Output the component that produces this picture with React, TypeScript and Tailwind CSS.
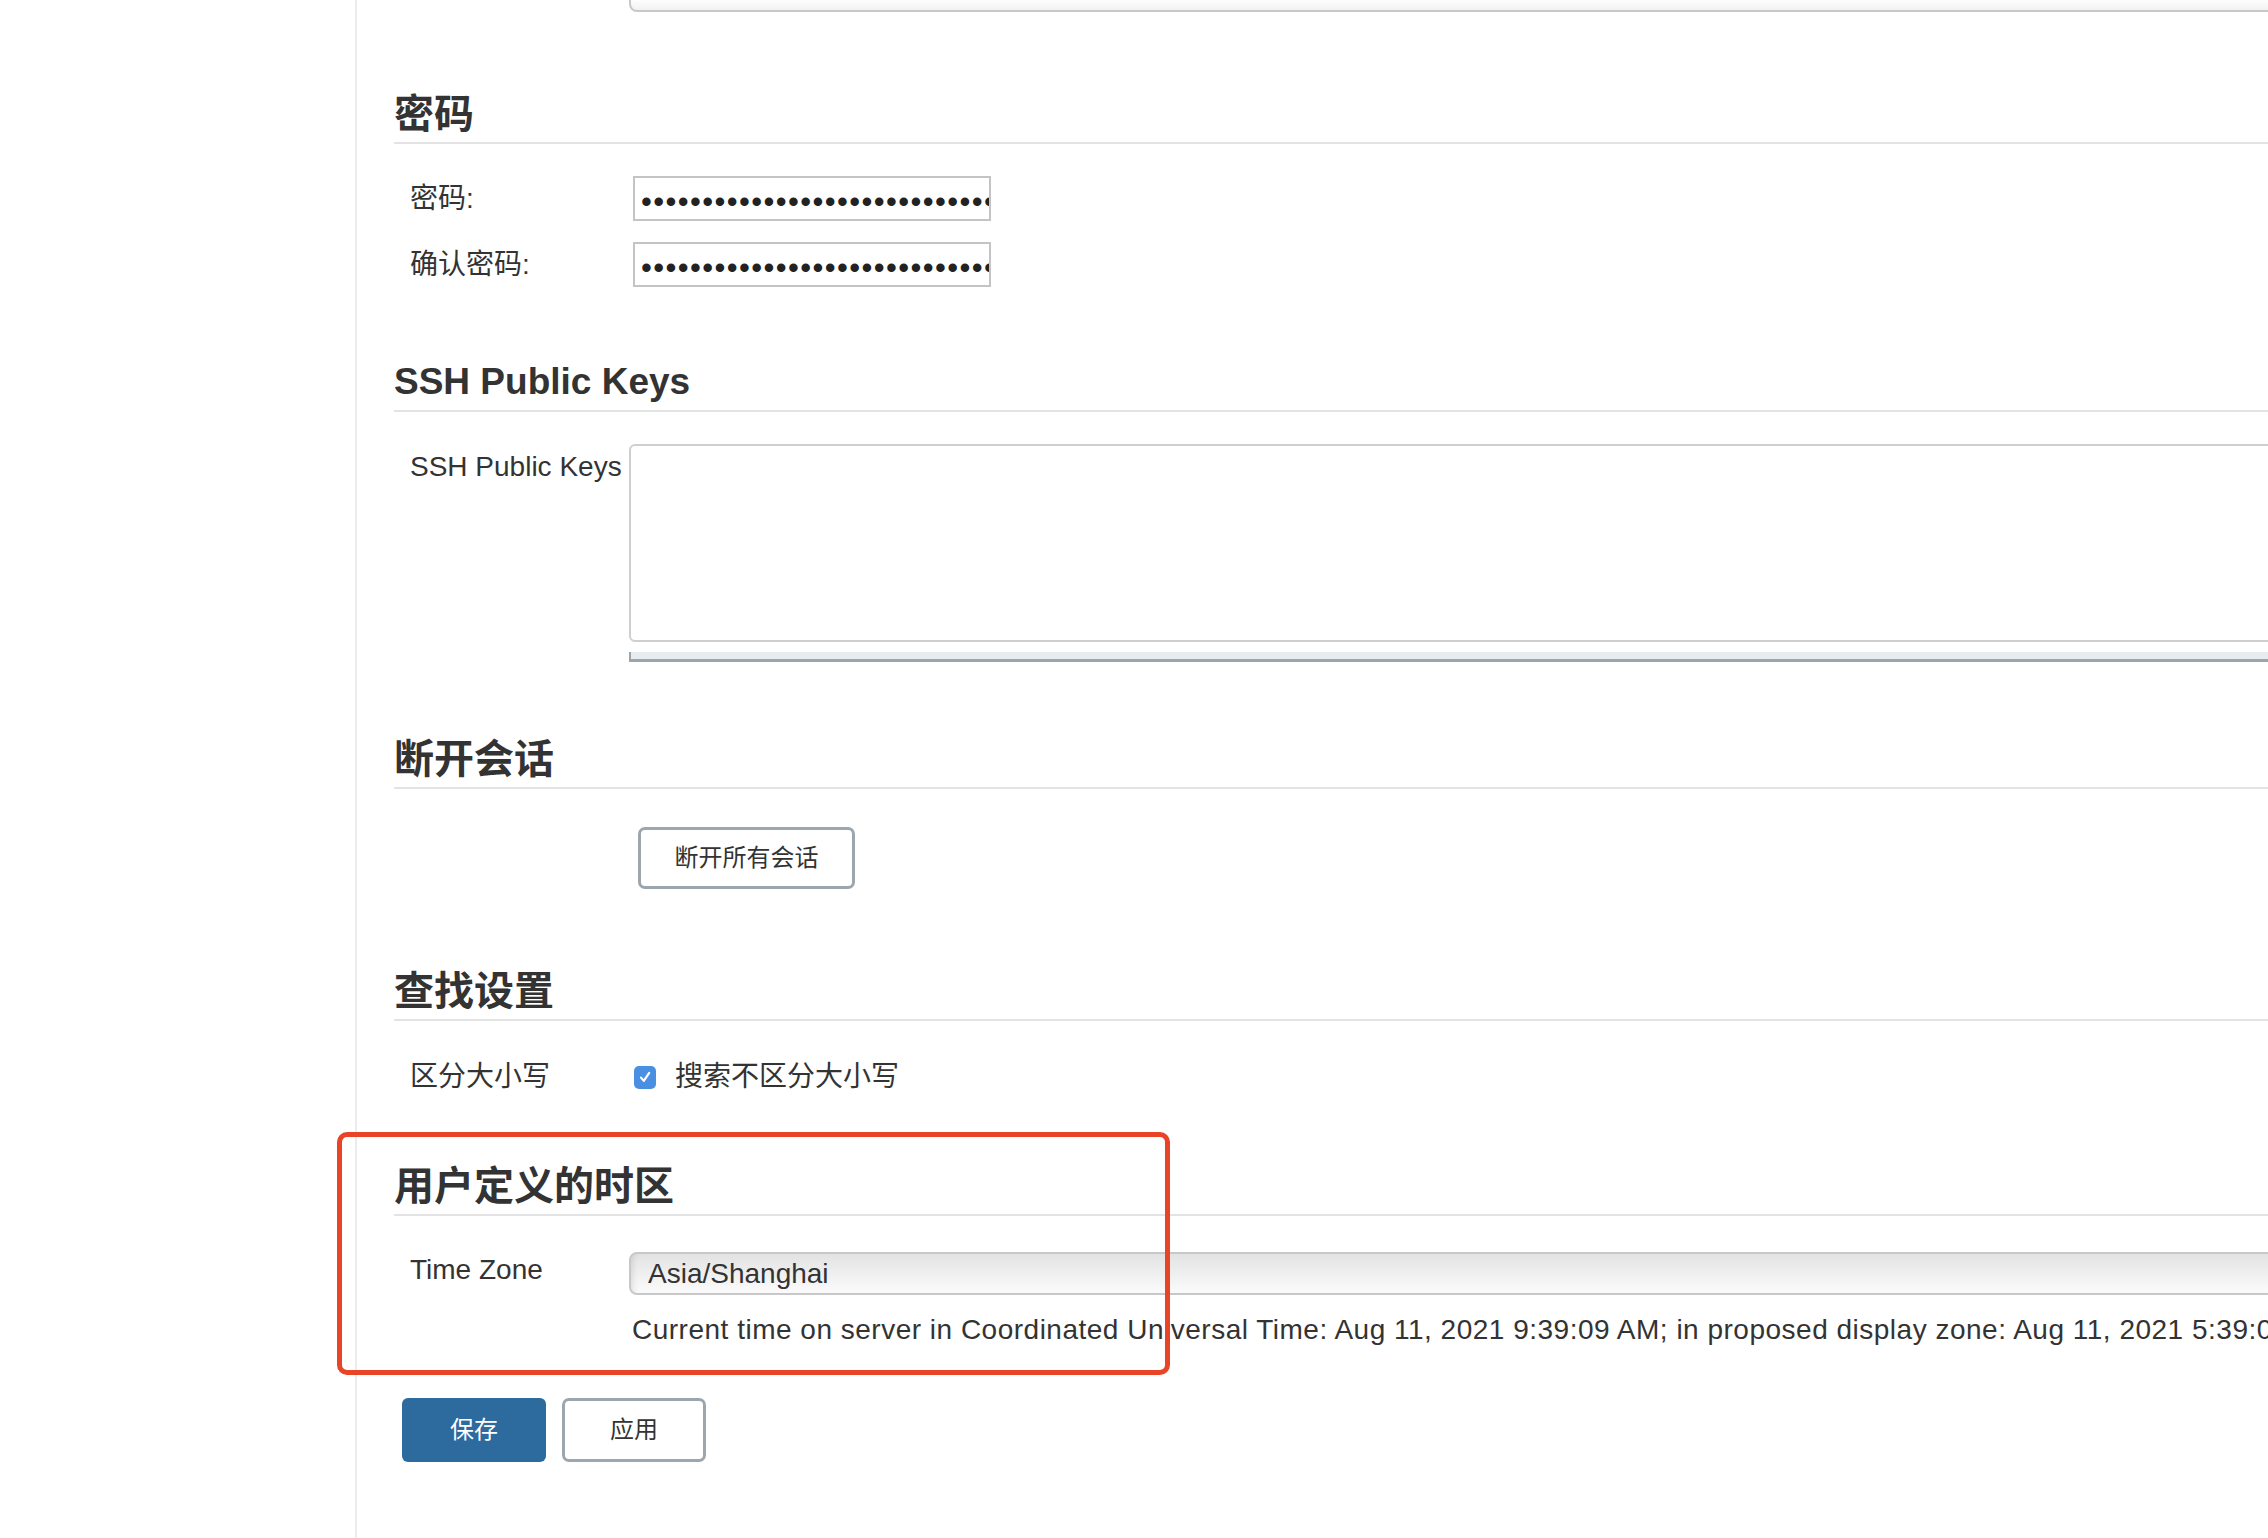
import React from 'react';

const label = 'w-[235px] shrink-0 pl-[16px] text-[28px] leading-[34px]';

function SectionTitle({ children, latin }: { children: React.ReactNode; latin?: boolean }) {
  return (
    <div className="border-b-2 border-[#e3e3e3] pb-[4px]">
      <h2
        className={
          latin
            ? 'h-[48px] text-[37px] leading-[48px] font-bold'
            : 'h-[48px] text-[40px] leading-[48px] font-semibold'
        }
      >
        {children}
      </h2>
    </div>
  );
}

function PasswordField() {
  return (
    <div className="ml-[4px] flex h-[45px] w-[358px] items-center overflow-hidden border-2 border-[#c4c4c4] bg-white pl-[6px] pt-[7px]">
      <span className="whitespace-nowrap text-[31px] leading-[40px] tracking-[1.4px] text-[#222]">
        {'•'.repeat(40)}
      </span>
    </div>
  );
}

function OutlineButton({ children, className }: { children: React.ReactNode; className?: string }) {
  return (
    <button
      type="button"
      className={
        'flex items-center justify-center rounded-[7px] border-[3px] border-[#9ca6ae] bg-white text-[24px] text-[#333] ' +
        (className ?? '')
      }
    >
      {children}
    </button>
  );
}

export default function App() {
  return (
    <div className="relative flex h-[1538px] w-[2268px] overflow-hidden bg-white font-['Liberation_Sans','Noto_Sans_CJK_SC',sans-serif] text-[#333]">
      <div className="w-[357px] shrink-0 border-r-2 border-[#ececec]" />

      <div className="min-w-0 flex-1 pl-[37px]">
        <div className="flex w-[1920px] flex-col">
          {/* bottom of the previous field, cut off by the top edge */}
          <div className="ml-[235px] h-[12px] rounded-bl-[8px] border-b-2 border-l-2 border-[#c8c8c8] bg-linear-to-b from-[#fdfdfd] to-[#f2f2f2]" />

          <div className="mt-[78px]">
            <SectionTitle>密码</SectionTitle>
          </div>
          <div className="mt-[32px] flex items-center">
            <div className={label}>密码:</div>
            <PasswordField />
          </div>
          <div className="mt-[21px] flex items-center">
            <div className={label}>确认密码:</div>
            <PasswordField />
          </div>

          <div className="mt-[71px]">
            <SectionTitle latin>SSH Public Keys</SectionTitle>
          </div>
          <div className="mt-[32px] flex items-start">
            <div className={label + ' pt-[6px]'}>SSH Public Keys</div>
            <div className="h-[198px] flex-1 rounded-[6px] border-2 border-[#cfcfcf] bg-white" />
          </div>
          <div className="ml-[235px] mt-[10px] h-[10px] border-b-[3px] border-l-2 border-[#9aa5ad] bg-[#e9ecef]" />

          <div className="mt-[73px]">
            <SectionTitle>断开会话</SectionTitle>
          </div>
          <div className="mt-[38px] flex">
            <OutlineButton className="ml-[244px] h-[62px] w-[217px]">断开所有会话</OutlineButton>
          </div>

          <div className="mt-[78px]">
            <SectionTitle>查找设置</SectionTitle>
          </div>
          <div className="mt-[33px] flex h-[46px] items-center">
            <div className={label}>区分大小写</div>
            <span className="ml-[5px] flex h-[23px] w-[22px] items-center justify-center rounded-[5px] bg-[#4a90e2]">
              <svg viewBox="0 0 16 16" className="h-[16px] w-[16px]" fill="none">
                <path d="M4 8.6l2.8 3.2L12.2 3.8" stroke="white" strokeWidth="2.2" strokeLinecap="round" strokeLinejoin="round" />
              </svg>
            </span>
            <span className="ml-[19px] text-[28px] leading-[34px]">搜索不区分大小写</span>
          </div>

          <div className="mt-[62px]">
            <SectionTitle>用户定义的时区</SectionTitle>
          </div>
          <div className="mt-[36px] flex items-start">
            <div className={label + ' pt-[1px]'}>Time Zone</div>
            <div className="flex h-[43px] flex-1 items-center rounded-[8px] border-2 border-[#c8c8c8] bg-linear-to-b from-[#e3e3e3] to-[#fbfbfb] pl-[17px] text-[28px] shadow-[inset_6px_0_6px_-5px_rgba(0,0,0,0.12)]">
              Asia/Shanghai
            </div>
          </div>
          <div className="ml-[238px] mt-[18px] whitespace-nowrap text-[28px] leading-[34px] tracking-[0.5px]">
            Current time on server in Coordinated Universal Time: Aug 11, 2021 9:39:09 AM; in proposed display zone: Aug 11, 2021 5:39:09 PM
          </div>

          <div className="mt-[51px] flex gap-[16px] pl-[8px]">
            <button
              type="button"
              className="flex h-[64px] w-[144px] items-center justify-center rounded-[6px] bg-[#2d6a9e] text-[24px] text-white"
            >
              保存
            </button>
            <OutlineButton className="h-[64px] w-[144px]">应用</OutlineButton>
          </div>
        </div>
      </div>

      {/* highlight drawn over the screenshot */}
      <div className="pointer-events-none absolute left-[337px] top-[1132px] h-[243px] w-[833px] rounded-[10px] border-[5px] border-[#ea4427]" />
    </div>
  );
}
